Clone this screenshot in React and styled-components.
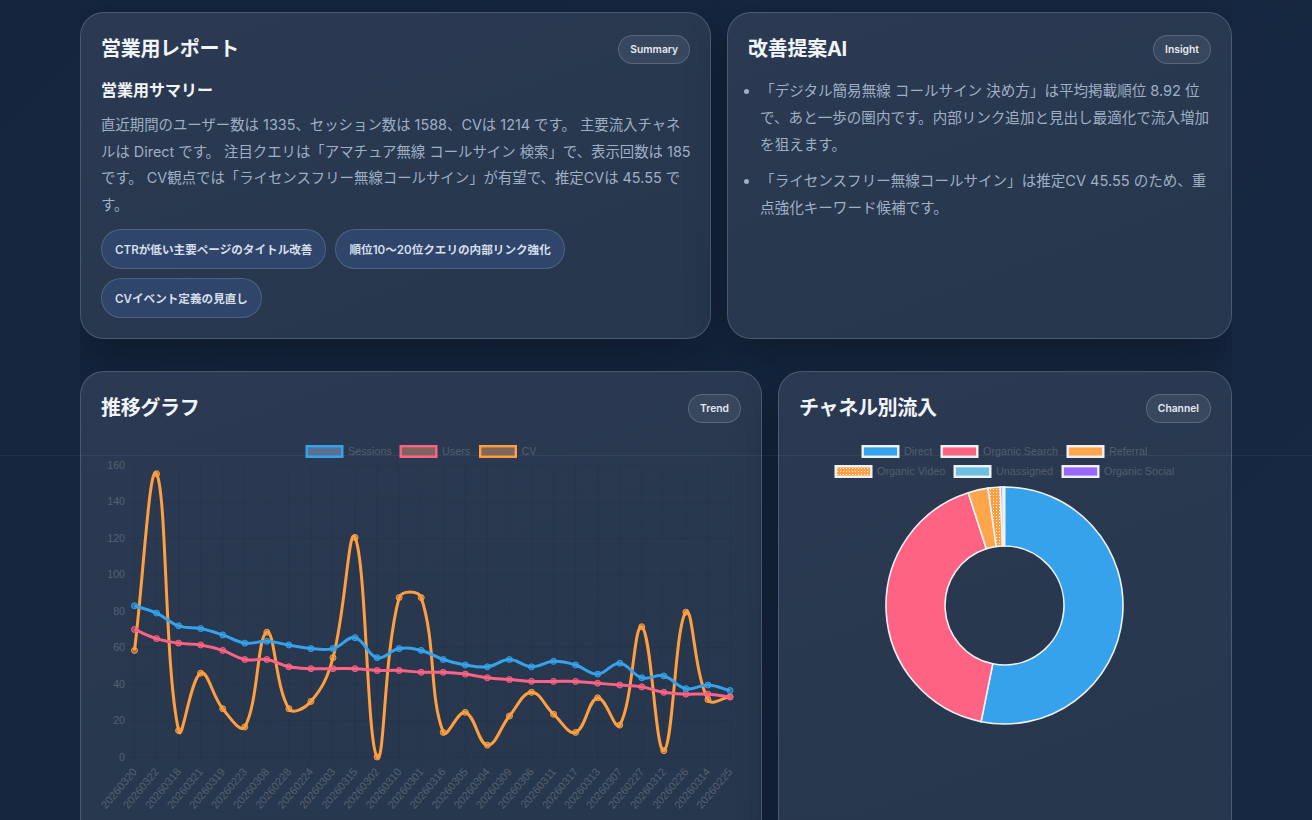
import styled, { createGlobalStyle } from 'styled-components';

const GlobalStyle = createGlobalStyle`
    html, body {
        height: 100%;
        margin: 0;
        overflow: hidden;
    }
    body {
        background: linear-gradient(135deg, #15253e 0%, #172842 100%);
        font-family: Inter, "Noto Sans CJK JP", sans-serif;
    }
    * { box-sizing: border-box; }
`;

const Seam = styled.div`
    position: fixed;
    left: 0;
    right: 0;
    top: 455px;
    height: 1px;
    background: rgba(255, 255, 255, 0.05);
    pointer-events: none;
`;

const Page = styled.main`
    width: 1152px;
    height: 820px;
    margin: 0 auto;
    padding-top: 12px;
    overflow: hidden;
    display: flex;
    flex-direction: column;
    gap: 32px;
`;
const Row = styled.section`
    display: grid;
    grid-template-columns: ${(props) => props.$columns};
    gap: 16px;
`;
const Card = styled.article`
    padding: 20px;
    border-radius: 24px;
    border: 1px solid rgba(148, 163, 184, 0.32);
    background: linear-gradient(160deg, #2b3a52 0%, #26364c 100%);
    box-shadow: 0 16px 40px rgba(0, 0, 0, 0.3);
`;
const CardHead = styled.header`
    display: flex;
    justify-content: space-between;
    align-items: center;
    height: 32px;
    margin-bottom: 13px;
`;
const Title = styled.h2`
    margin: 0;
    padding-bottom: 1px;
    font-size: 20px;
    line-height: 26px;
    letter-spacing: -0.3px;
    font-weight: 700;
    color: #f1f5f9;
`;
const Badge = styled.span`
    display: flex;
    align-items: center;
    height: 29px;
    padding: 0 11px;
    border-radius: 999px;
    border: 1px solid rgba(148, 163, 184, 0.35);
    background: rgba(148, 163, 184, 0.14);
    font-size: 10.3px;
    font-weight: 600;
    color: #e2e8f0;
`;
const SubTitle = styled.h3`
    margin: 0 0 10px;
    font-size: 16px;
    line-height: 24px;
    font-weight: 700;
    color: #f1f5f9;
`;
const Body = styled.p`
    margin: 0 -3px 11px 0;
    font-size: 14.4px;
    line-height: 26.6px;
    color: #9fafc4;
`;
const Pills = styled.div`
    display: flex;
    flex-wrap: wrap;
    gap: 9px;
`;
const Pill = styled.span`
    display: flex;
    align-items: center;
    height: 40px;
    padding: 0 13px;
    border-radius: 999px;
    border: 1px solid rgba(148, 163, 184, 0.3);
    background: #30456a;
    font-size: 11.6px;
    font-weight: 600;
    color: #d5dfec;
`;
const List = styled.ul`
    margin: 0;
    padding-left: 12px;
    font-size: 14.56px;
    line-height: 27.2px;
    color: #9fafc4;

    li {
        margin-bottom: 8px;
    }
`;
const ChartBox = styled.svg`
    display: block;
    margin-top: 16px;
    overflow: visible;
    font-family: "Liberation Sans", Arial, sans-serif;
`;

const dates = ['20260320', '20260322', '20260318', '20260321', '20260319', '20260223', '20260308', '20260228', '20260224', '20260303', '20260315', '20260302', '20260310', '20260301', '20260316', '20260305', '20260304', '20260309', '20260306', '20260311', '20260317', '20260313', '20260307', '20260227', '20260312', '20260226', '20260314', '20260225'];
// chart.js paints the first dataset last, so Sessions ends up on top
const series = [
    { name: 'CV', color: '#ff9f40', fill: 'rgba(255,159,64,.5)', data: [58.5, 155.5, 14.5, 46, 26.5, 16.5, 68.5, 26.5, 30.5, 54.5, 120.5, 0, 87.5, 87.5, 13.5, 24.5, 6.5, 22.5, 35.5, 23.5, 13.5, 32.5, 17.5, 71.5, 3.5, 79.5, 31.5, 33] },
    { name: 'Users', color: '#ff6384', fill: 'rgba(255,99,132,.5)', data: [70, 65, 62.5, 61.5, 58.5, 53.5, 53.5, 49.5, 48.5, 48.5, 48.5, 47.5, 47.5, 46.5, 46.5, 45.5, 43.5, 42.5, 41.5, 41.5, 41.5, 40.5, 39.5, 38.5, 35.5, 34.5, 34.5, 33] },
    { name: 'Sessions', color: '#36a2eb', fill: 'rgba(54,162,235,.5)', data: [83, 79, 72, 70.5, 67, 62.5, 63.5, 61.5, 59.5, 59.5, 65.5, 54.5, 59.5, 58.5, 53.5, 50.5, 49.5, 53.5, 49.5, 52.5, 50.5, 45.5, 51.5, 43.5, 44.5, 37.5, 39.5, 36.5] },
];

const X0 = 134.5;
const STEP = (730 - X0) / 27;
const Y0 = 757;
const SCALE = (Y0 - 465.5) / 160;
const px = (i) => X0 + i * STEP;
const py = (v) => Y0 - v * SCALE;

// same bezier maths as a chart.js line with tension 0.4
const curve = (data, t = 0.4) => {
    const pts = data.map((v, i) => [px(i), py(v)]);
    const ctrl = pts.map((p, i) => {
        const prev = pts[i - 1] || p;
        const next = pts[i + 1] || p;
        const d01 = Math.hypot(p[0] - prev[0], p[1] - prev[1]);
        const d12 = Math.hypot(next[0] - p[0], next[1] - p[1]);
        const sum = d01 + d12 || 1;
        const fa = (t * d01) / sum;
        const fb = (t * d12) / sum;
        return {
            a: [p[0] - fa * (next[0] - prev[0]), p[1] - fa * (next[1] - prev[1])],
            b: [p[0] + fb * (next[0] - prev[0]), p[1] + fb * (next[1] - prev[1])],
        };
    });
    let d = `M${pts[0][0]} ${pts[0][1]}`;
    for (let i = 1; i < pts.length; i++) {
        d += `C${ctrl[i - 1].b[0]} ${ctrl[i - 1].b[1]} ${ctrl[i].a[0]} ${ctrl[i].a[1]} ${pts[i][0]} ${pts[i][1]}`;
    }
    return d;
};

const LegendItem = ({ x, y, label, fill, stroke }) => (
    <g>
        <rect x={x + 1.2} y={y + 1.2} width={35.6} height={10.6} fill={fill} stroke={stroke} strokeWidth={2.4} />
        <text x={x + 42.5} y={y + 10} fontSize={10.8} fill="#545e6e">{label}</text>
    </g>
);

const TrendChart = () => (
    <ChartBox width="640" height="420" viewBox="101 440 640 420">
        <LegendItem x={305.5} y={445} label="Sessions" stroke="#36a2eb" fill="rgba(130,170,215,.5)" />
        <LegendItem x={399.5} y={445} label="Users" stroke="#ff6384" fill="rgba(215,140,110,.5)" />
        <LegendItem x={479} y={445} label="CV" stroke="#ff9f40" fill="rgba(215,150,90,.5)" />
        {dates.map((d, i) => (
            <g key={d}>
                <line x1={px(i)} x2={px(i)} y1={465.5} y2={765} stroke="rgba(0,0,0,.05)" />
                <text transform={`translate(${px(i) + 3} ${772}) rotate(-50)`} textAnchor="end" fontSize={11} fill="#566070">{d}</text>
            </g>
        ))}
        {[0, 20, 40, 60, 80, 100, 120, 140, 160].map((v) => (
            <g key={v}>
                <line x1={126} x2={730} y1={py(v)} y2={py(v)} stroke="rgba(0,0,0,.05)" />
                <text x={125} y={py(v) + 3.5} textAnchor="end" fontSize={10.6} fill="#566070">{v}</text>
            </g>
        ))}
        {series.map((s) => (
            <g key={s.name}>
                <path d={curve(s.data)} fill="none" stroke={s.color} strokeWidth={3} />
                {s.data.map((v, i) => (
                    <circle key={i} cx={px(i)} cy={py(v)} r={3} fill={s.fill} stroke={s.color} strokeWidth={1} />
                ))}
            </g>
        ))}
    </ChartBox>
);

const CX = 1004.5;
const CY = 605.5;
const R = 118.5;
const IR = 59.5;
const slices = [
    { from: 0, to: 191.4, fill: '#36a2eb' },
    { from: 191.4, to: 342.2, fill: '#ff6384' },
    { from: 342.2, to: 352, fill: '#ffa54a' },
    { from: 352, to: 358, fill: 'url(#dots)' },
    { from: 358, to: 359.3, fill: '#6bbfdf' },
    { from: 359.3, to: 360, fill: '#9966ff' },
];
const polar = (r, deg) => {
    const a = (deg * Math.PI) / 180;
    return `${CX + r * Math.sin(a)} ${CY - r * Math.cos(a)}`;
};
const arc = ({ from, to }) => {
    const big = to - from > 180 ? 1 : 0;
    return `M${polar(R, from)}A${R} ${R} 0 ${big} 1 ${polar(R, to)}L${polar(IR, to)}A${IR} ${IR} 0 ${big} 0 ${polar(IR, from)}Z`;
};

const ChannelChart = () => (
    <ChartBox width="412" height="420" viewBox="799 440 412 420">
        <defs>
            <pattern id="dots" width="3" height="3" patternUnits="userSpaceOnUse">
                <rect width="3" height="3" fill="#ff9f40" />
                <rect width="1" height="1" fill="#f1f5f9" />
            </pattern>
        </defs>
        <LegendItem x={861.5} y={445} label="Direct" fill="#36a2eb" stroke="#eef2f7" />
        <LegendItem x={940.5} y={445} label="Organic Search" fill="#ff6384" stroke="#eef2f7" />
        <LegendItem x={1066.5} y={445} label="Referral" fill="#ffa54a" stroke="#eef2f7" />
        <LegendItem x={834.5} y={465} label="Organic Video" fill="url(#dots)" stroke="#eef2f7" />
        <LegendItem x={953.5} y={465} label="Unassigned" fill="#6bbfdf" stroke="#eef2f7" />
        <LegendItem x={1061.5} y={465} label="Organic Social" fill="#9966ff" stroke="#eef2f7" />
        {slices.map((s) => (
            <path key={s.from} d={arc(s)} fill={s.fill} stroke="#eef2f7" strokeWidth={1.6} />
        ))}
    </ChartBox>
);

const App = () => {
    return (
        <>
            <GlobalStyle />
            <Page>
                <Row $columns="1.25fr 1fr">
                    <Card>
                        <CardHead>
                            <Title>営業用レポート</Title>
                            <Badge>Summary</Badge>
                        </CardHead>
                        <SubTitle>営業用サマリー</SubTitle>
                        <Body>
                            直近期間のユーザー数は 1335、セッション数は 1588、CVは 1214 です。 主要流入チャネルは Direct です。 注目クエリは「アマチュア無線 コールサイン 検索」で、表示回数は 185 です。 CV観点では「ライセンスフリー無線コールサイン」が有望で、推定CVは 45.55 です。
                        </Body>
                        <Pills>
                            <Pill>CTRが低い主要ページのタイトル改善</Pill>
                            <Pill>順位10〜20位クエリの内部リンク強化</Pill>
                            <Pill>CVイベント定義の見直し</Pill>
                        </Pills>
                    </Card>
                    <Card>
                        <CardHead>
                            <Title>改善提案AI</Title>
                            <Badge>Insight</Badge>
                        </CardHead>
                        <List>
                            <li>「デジタル簡易無線 コールサイン 決め方」は平均掲載順位 8.92 位で、あと一歩の圏内です。内部リンク追加と見出し最適化で流入増加を狙えます。</li>
                            <li>「ライセンスフリー無線コールサイン」は推定CV 45.55 のため、重点強化キーワード候補です。</li>
                        </List>
                    </Card>
                </Row>
                <Row $columns="1.5fr 1fr">
                    <Card>
                        <CardHead>
                            <Title>推移グラフ</Title>
                            <Badge>Trend</Badge>
                        </CardHead>
                        <TrendChart />
                    </Card>
                    <Card>
                        <CardHead>
                            <Title>チャネル別流入</Title>
                            <Badge>Channel</Badge>
                        </CardHead>
                        <ChannelChart />
                    </Card>
                </Row>
            </Page>
            <Seam />
        </>
    );
};
export default App;
